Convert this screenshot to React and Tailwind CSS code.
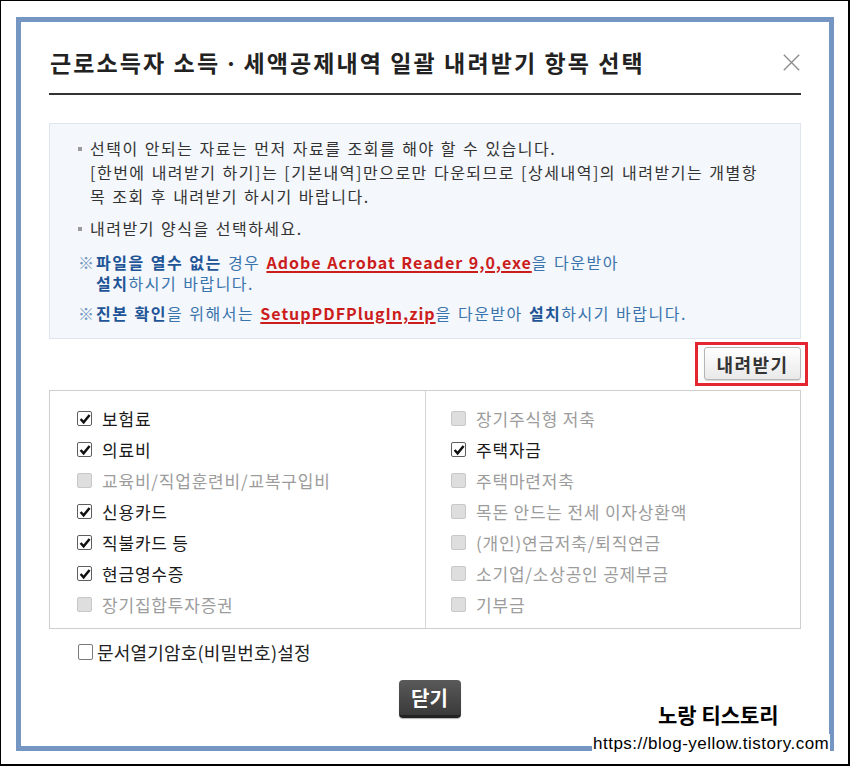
import React from "react";

function Box({ state }) {
  if (state === "checked") {
    return (
      <span className="w-[15px] h-[15px] shrink-0 border border-[#5e5e5e] rounded-[2px] bg-white flex items-center justify-center">
        <svg width="12" height="12" viewBox="0 0 12 12">
          <path d="M1.6 6 L4.6 9.3 L10.6 2" fill="none" stroke="#111" strokeWidth="2.5" strokeLinejoin="miter" />
        </svg>
      </span>
    );
  }
  if (state === "disabled") {
    return <span className="w-[15px] h-[15px] shrink-0 border border-[#c8c8c8] rounded-[2px] bg-[#dedede]" />;
  }
  return <span className="w-[15px] h-[16px] shrink-0 border border-[#7a7a7a] rounded-[2px] bg-white" />;
}

function Item({ state, label }) {
  const dis = state === "disabled";
  return (
    <div className="h-[31px] flex items-center gap-[10px]">
      <Box state={state} />
      <span
        className={
          dis
            ? "text-[17px] leading-[22px] tracking-[0.8px] text-[#9c9c9c] whitespace-nowrap"
            : "text-[17px] leading-[22px] tracking-[0.8px] text-[#1a1a1a] whitespace-nowrap"
        }
      >
        {label}
      </span>
    </div>
  );
}

const left = [
  ["checked", "보험료"],
  ["checked", "의료비"],
  ["disabled", "교육비/직업훈련비/교복구입비"],
  ["checked", "신용카드"],
  ["checked", "직불카드 등"],
  ["checked", "현금영수증"],
  ["disabled", "장기집합투자증권"],
];

const right = [
  ["disabled", "장기주식형 저축"],
  ["checked", "주택자금"],
  ["disabled", "주택마련저축"],
  ["disabled", "목돈 안드는 전세 이자상환액"],
  ["disabled", "(개인)연금저축/퇴직연금"],
  ["disabled", "소기업/소상공인 공제부금"],
  ["disabled", "기부금"],
];

export default function App() {
  return (
    <div className="relative w-[850px] h-[766px] bg-white border border-black border-r-2 border-b-2 overflow-hidden font-['Noto_Sans_CJK_KR',sans-serif]">
      <div className="ml-[15px] mt-[16px] w-[818px] h-[734px] border-[5px] border-[#7595c2] bg-white">
        <div className="mx-[28px]">
          {/* header */}
          <div className="flex items-center justify-between pt-[25px] pb-[16px] border-b-2 border-[#333]">
            <h1 className="pl-[1px] text-[23px] leading-[30px] tracking-[2.1px] font-semibold text-[#222] whitespace-nowrap">
              근로소득자 소득ㆍ세액공제내역 일괄 내려받기 항목 선택
            </h1>
            <svg width="17" height="17" viewBox="0 0 17 17" className="mr-[1px]">
              <path d="M0.8 0.8 L16.2 16.2 M16.2 0.8 L0.8 16.2" stroke="#8a8a8a" strokeWidth="1.3" fill="none" />
            </svg>
          </div>

          {/* info box */}
          <div className="mt-[28px] border border-[#dfe5ec] bg-[#f4f7fb] pl-[28px] pt-[12px] pb-[14px] text-[16px] tracking-[1.5px] [word-spacing:1px] text-[#333] whitespace-nowrap">
            <div className="flex leading-[24px]">
              <span className="w-[12px] shrink-0">
                <span className="block w-[4px] h-[4px] bg-[#9a9a9a] mt-[11px]" />
              </span>
              <p>
                선택이 안되는 자료는 먼저 자료를 조회를 해야 할 수 있습니다.
                <br />
                [한번에 내려받기 하기]는 [기본내역]만으로만 다운되므로 [상세내역]의 내려받기는 개별항
                <br />
                목 조회 후 내려받기 하시기 바랍니다.
              </p>
            </div>
            <div className="flex leading-[24px] mt-[8px]">
              <span className="w-[12px] shrink-0">
                <span className="block w-[4px] h-[4px] bg-[#9a9a9a] mt-[11px]" />
              </span>
              <p>내려받기 양식을 선택하세요.</p>
            </div>
            <div className="flex leading-[21px] mt-[12px] text-[#3a74ad]">
              <span className="w-[18px] shrink-0 text-[#6d93bf] tracking-normal">※</span>
              <p>
                <b className="text-[#1f5597]">파일을 열수 없는</b> 경우{" "}
                <span className="font-bold tracking-[1px] text-[#cc1d1d] underline decoration-2 underline-offset-2">
                  Adobe Acrobat Reader 9,0,exe
                </span>
                을 다운받아
                <br />
                <b className="text-[#1f5597]">설치</b>하시기 바랍니다.
              </p>
            </div>
            <div className="flex leading-[21px] mt-[9px] text-[#3a74ad]">
              <span className="w-[18px] shrink-0 text-[#6d93bf] tracking-normal">※</span>
              <p>
                <b className="text-[#1f5597]">진본 확인</b>을 위해서는{" "}
                <span className="font-bold tracking-[1px] text-[#cc1d1d] underline decoration-2 underline-offset-2">SetupPDFPlugIn,zip</span>
                을 다운받아 <b className="text-[#1f5597]">설치</b>하시기 바랍니다.
              </p>
            </div>
          </div>

          {/* download button */}
          <div className="mt-[3px] flex justify-end">
            <div className="-mr-[7px] border-[3px] border-[#e3262f] pl-[6px] pr-[4px] pt-[2px] pb-[3px]">
              <button className="w-[97px] h-[33px] border border-[#b5b5b5] rounded-[3px] bg-linear-to-b from-white to-[#e9e9e9] text-[18px] leading-[20px] font-bold text-[#333] tracking-[1.5px] shadow-[0_1px_1px_rgba(0,0,0,0.15)]">
                내려받기
              </button>
            </div>
          </div>

          {/* checkbox table */}
          <div className="mt-[4px] grid grid-cols-[376px_1fr] border border-[#cfcfcf]">
            <div className="border-r border-[#d5d5d5] pl-[27px] pt-[12px] pb-[8px]">
              {left.map(([s, l]) => (
                <Item key={l} state={s} label={l} />
              ))}
            </div>
            <div className="pl-[25px] pt-[12px] pb-[8px]">
              {right.map(([s, l]) => (
                <Item key={l} state={s} label={l} />
              ))}
            </div>
          </div>

          {/* password */}
          <div className="mt-[11px] pl-[29px] h-[24px] flex items-center gap-[4px]">
            <Box state="empty" />
            <span className="text-[18px] leading-[24px] text-[#222] tracking-[0.2px] whitespace-nowrap">문서열기암호(비밀번호)설정</span>
          </div>

          {/* close button */}
          <div className="mt-[16px] flex justify-center pl-[9px]">
            <button className="w-[62px] h-[38px] rounded-[4px] bg-linear-to-b from-[#5a5a5a] to-[#3a3a3a] border-b-[3px] border-[#222] text-white text-[20px] leading-[24px] font-bold shadow-[0_1px_1px_rgba(0,0,0,0.3)]">
              닫기
            </button>
          </div>
        </div>
      </div>

      {/* watermark */}
      <div className="absolute left-[657px] top-[699px] text-[21px] leading-[28px] font-bold text-black whitespace-nowrap">
        노랑 티스토리
      </div>
      <div className="absolute left-[591px] top-[733px] bg-white px-[1px] text-[17px] leading-[20px] tracking-[0.5px] text-black whitespace-nowrap font-['Liberation_Sans',Arial,sans-serif]">
        https://blog-yellow.tistory.com
      </div>
    </div>
  );
}
